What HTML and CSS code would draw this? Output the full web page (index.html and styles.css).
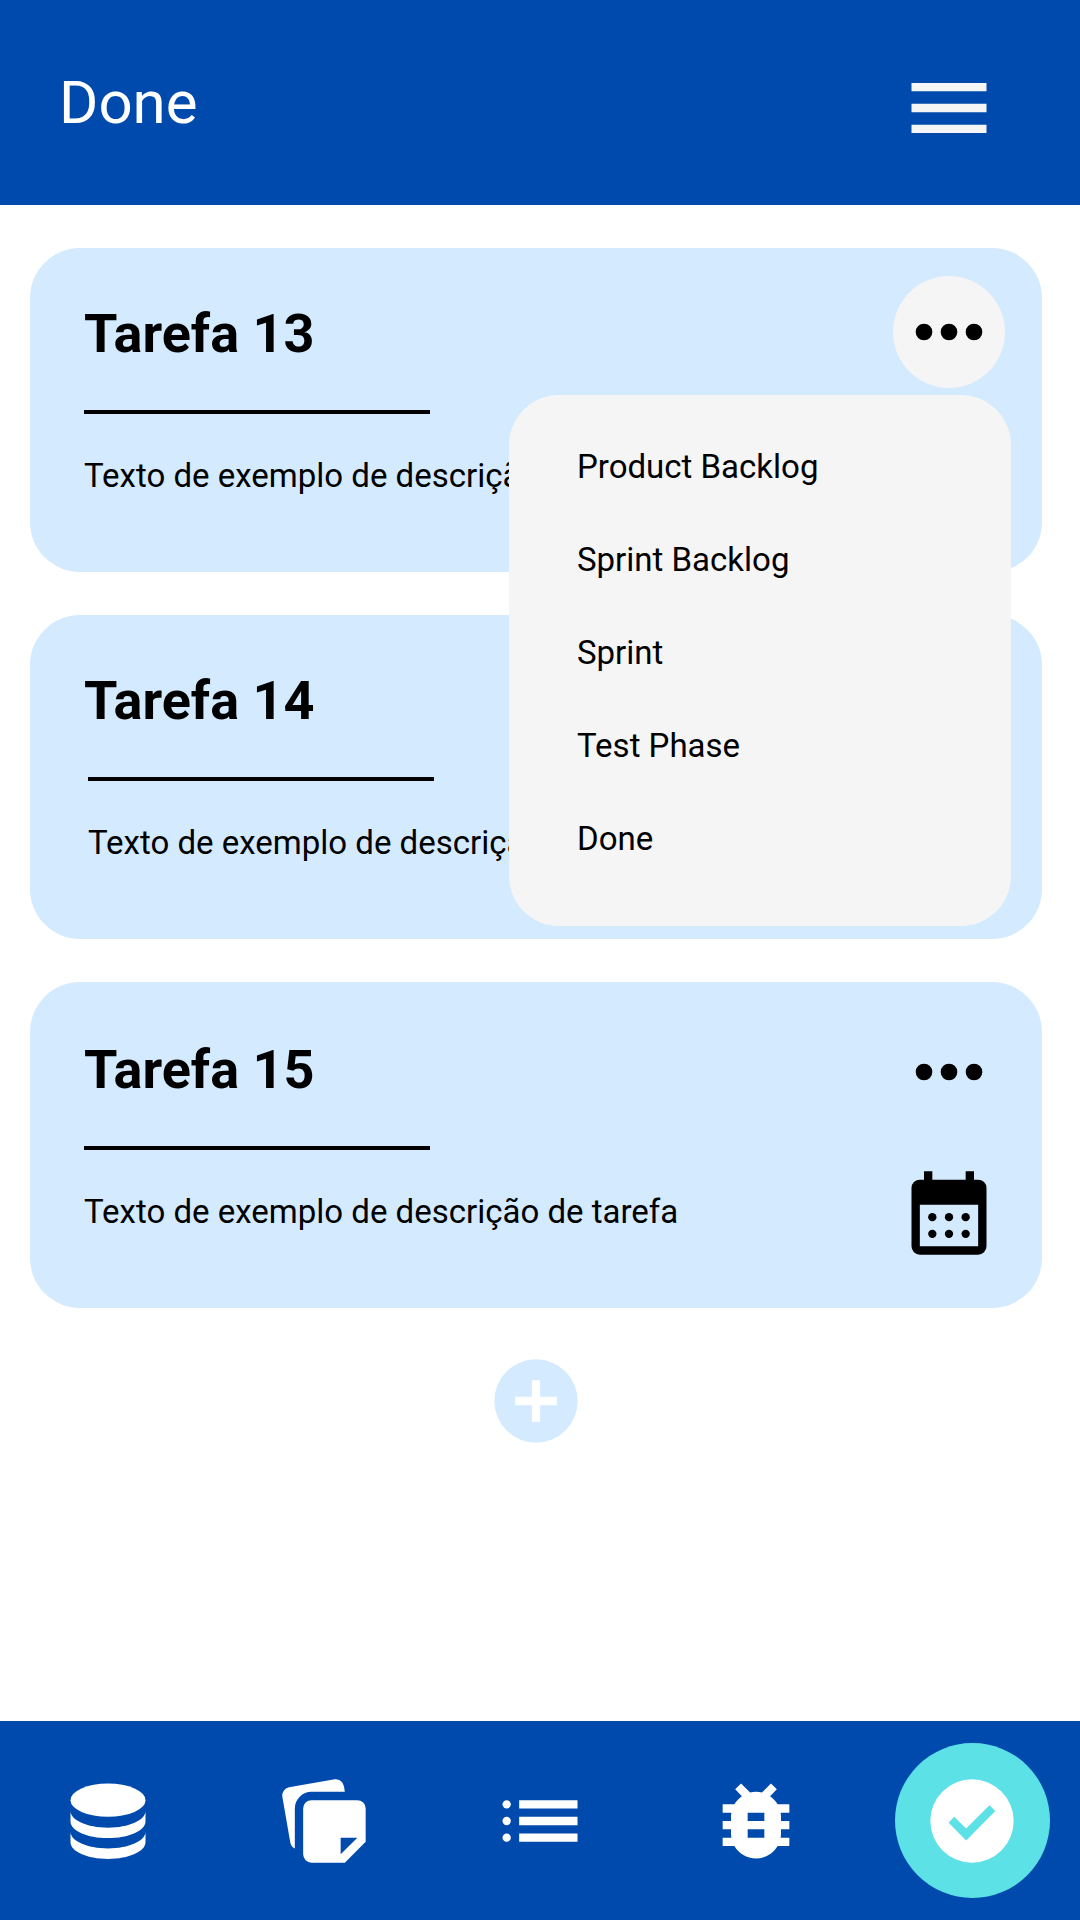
FILE: index.html
```html
<!DOCTYPE html>
<html lang="pt-BR">
<head>
  <meta charset="utf-8">
  <meta name="viewport" content="width=device-width, initial-scale=1">
  <title>Done</title>
  <link rel="stylesheet" href="styles.css">
</head>
<body>
  <svg class="sprite" aria-hidden="true">
    <symbol id="icon-more" viewBox="0 0 24 24">
      <circle cx="6" cy="12" r="2"/><circle cx="12" cy="12" r="2"/><circle cx="18" cy="12" r="2"/>
    </symbol>
    <symbol id="icon-calendar" viewBox="0 0 24 24">
      <path fill-rule="evenodd" d="M6 2h2v2h8V2h2v2h1a2 2 0 0 1 2 2v14a2 2 0 0 1-2 2H5a2 2 0 0 1-2-2V6a2 2 0 0 1 2-2h1zM5 10v10h14V10z"/>
      <circle cx="8" cy="13" r="1"/><circle cx="12" cy="13" r="1"/><circle cx="16" cy="13" r="1"/>
      <circle cx="8" cy="17" r="1"/><circle cx="12" cy="17" r="1"/><circle cx="16" cy="17" r="1"/>
    </symbol>
  </svg>

  <header class="topbar">
    <h1 class="topbar-title">Done</h1>
    <button class="icon-button topbar-menu" type="button" aria-label="Menu">
      <svg class="icon" viewBox="0 0 24 24"><path d="M3 6h18v2H3zM3 11h18v2H3zM3 16h18v2H3z"/></svg>
    </button>
  </header>

  <main class="board">
    <article class="task">
      <div class="task-body">
        <h2 class="task-title">Tarefa 13</h2>
        <div class="task-detail">
          <hr class="task-rule">
          <p class="task-text">Texto de exemplo de descrição de tarefa</p>
        </div>
      </div>
      <div class="task-actions">
        <button class="icon-button is-open" type="button" aria-label="Mover tarefa 13" aria-expanded="true">
          <svg class="icon"><use href="#icon-more"/></svg>
        </button>
        <button class="icon-button" type="button" aria-label="Data da tarefa 13">
          <svg class="icon"><use href="#icon-calendar"/></svg>
        </button>
      </div>
      <ul class="move-menu">
        <li><button class="move-option" type="button">Product Backlog</button></li>
        <li><button class="move-option" type="button">Sprint Backlog</button></li>
        <li><button class="move-option" type="button">Sprint</button></li>
        <li><button class="move-option" type="button">Test Phase</button></li>
        <li><button class="move-option" type="button">Done</button></li>
      </ul>
    </article>

    <article class="task">
      <div class="task-body">
        <h2 class="task-title">Tarefa 14</h2>
        <div class="task-detail task-detail-indented">
          <hr class="task-rule">
          <p class="task-text">Texto de exemplo de descrição de tarefa</p>
        </div>
      </div>
      <div class="task-actions">
        <button class="icon-button" type="button" aria-label="Mover tarefa 14">
          <svg class="icon"><use href="#icon-more"/></svg>
        </button>
        <button class="icon-button" type="button" aria-label="Data da tarefa 14">
          <svg class="icon"><use href="#icon-calendar"/></svg>
        </button>
      </div>
    </article>

    <article class="task task-roomy">
      <div class="task-body">
        <h2 class="task-title">Tarefa 15</h2>
        <div class="task-detail">
          <hr class="task-rule">
          <p class="task-text">Texto de exemplo de descrição de tarefa</p>
        </div>
      </div>
      <div class="task-actions">
        <button class="icon-button" type="button" aria-label="Mover tarefa 15">
          <svg class="icon"><use href="#icon-more"/></svg>
        </button>
        <button class="icon-button" type="button" aria-label="Data da tarefa 15">
          <svg class="icon"><use href="#icon-calendar"/></svg>
        </button>
      </div>
    </article>

    <button class="icon-button add-task" type="button" aria-label="Adicionar tarefa">
      <svg class="icon" viewBox="0 0 24 24"><path fill-rule="evenodd" d="M12 2a10 10 0 1 0 0 20 10 10 0 0 0 0-20zM17 13h-4v4h-2v-4H7v-2h4V7h2v4h4z"/></svg>
    </button>
  </main>

  <nav class="tabs">
    <a class="tab" href="#product-backlog" aria-label="Product Backlog">
      <svg class="icon" viewBox="0 0 24 24"><ellipse cx="12" cy="7" rx="9" ry="4"/><path d="M3 9.6c0 2.2 4 4 9 4s9-1.8 9-4v2.5c0 2.2-4 4-9 4s-9-1.8-9-4zM3 14.6c0 2.2 4 4 9 4s9-1.8 9-4v2.5c0 2.2-4 4-9 4s-9-1.8-9-4z"/></svg>
    </a>
    <a class="tab" href="#sprint-backlog" aria-label="Sprint Backlog">
      <svg class="icon" viewBox="0 0 24 24"><path d="M17 5l-.2-1.3A2 2 0 0 0 14.6 2L3.6 3.9A2 2 0 0 0 2 6.2L3.9 17.1c.1.7.5 1.2 1.1 1.5V9a4 4 0 0 1 4-4z"/><path fill-rule="evenodd" d="M9 7h11a2 2 0 0 1 2 2v8l-5 5H9a2 2 0 0 1-2-2V9a2 2 0 0 1 2-2zM16 16v4l4-4z"/></svg>
    </a>
    <a class="tab" href="#sprint" aria-label="Sprint">
      <svg class="icon" viewBox="0 0 24 24"><circle cx="4" cy="8" r="1"/><circle cx="4" cy="12" r="1"/><circle cx="4" cy="16" r="1"/><path d="M7 7h14v2H7zM7 11h14v2H7zM7 15h14v2H7z"/></svg>
    </a>
    <a class="tab" href="#test-phase" aria-label="Test Phase">
      <svg class="icon" viewBox="0 0 24 24"><path d="M20 8h-2.81c-.45-.78-1.07-1.45-1.82-1.96L17 4.41 15.59 3l-2.17 2.17C12.96 5.06 12.49 5 12 5s-.96.06-1.41.17L8.41 3 7 4.41l1.62 1.63C7.88 6.55 7.26 7.22 6.81 8H4v2h2.09c-.05.33-.09.66-.09 1v1H4v2h2v1c0 .34.04.67.09 1H4v2h2.81c1.04 1.79 2.97 3 5.19 3s4.15-1.21 5.19-3H20v-2h-2.09c.05-.33.09-.66.09-1v-1h2v-2h-2v-1c0-.34-.04-.67-.09-1H20V8zm-6 8h-4v-2h4v2zm0-4h-4v-2h4v2z"/></svg>
    </a>
    <a class="tab tab-current" href="#done" aria-label="Done" aria-current="page">
      <svg class="icon" viewBox="0 0 24 24"><path fill-rule="evenodd" d="M12 2a10 10 0 1 0 0 20 10 10 0 0 0 0-20zM10.6 13.8l5.6-5.6 1.4 1.4-7 7.1-4.2-4.3 1.3-1.4z"/></svg>
    </a>
  </nav>
</body>
</html>
```

FILE: styles.css
```css
:root {
  --blue: #004aad;
  --card: #d3eaff;
  --surface: #f5f5f5;
  --accent: #5ce1e6;
}

* {
  box-sizing: border-box;
}

body {
  margin: 0;
  min-height: 100vh;
  display: flex;
  flex-direction: column;
  background: #fff;
  color: #000;
  font-family: Roboto, "Liberation Sans", sans-serif;
}

.sprite {
  display: none;
}

.icon {
  display: block;
  width: 100px;
  height: 100px;
  fill: currentColor;
}

.icon-button {
  display: flex;
  align-items: center;
  justify-content: center;
  width: 100px;
  height: 100px;
  padding: 0;
  border: 0;
  border-radius: 50%;
  background: none;
  color: inherit;
  cursor: pointer;
}

.topbar {
  display: flex;
  align-items: flex-start;
  justify-content: space-between;
  padding: 58px 81px 47px 59px;
  background: var(--blue);
}

.topbar-title {
  margin: 0;
  color: #fff;
  font-size: 60px;
  font-weight: 400;
  line-height: 90px;
}

.topbar-menu {
  color: var(--surface);
}

.board {
  flex: 1;
  display: flex;
  flex-direction: column;
  gap: 43px;
  padding: 43px 38px 43px 30px;
}

.task {
  position: relative;
  display: flex;
  justify-content: space-between;
  padding-right: 43px;
  padding-left: 54px;
  border-radius: 50px;
  background: var(--card);
}

.task-roomy {
  padding-top: 2px;
}

.task-body {
  padding: 54px 0 76px;
}

.task-title {
  margin: 0 0 44px;
  font-size: 54px;
  font-weight: 700;
  line-height: 64px;
}

.task-detail-indented {
  padding-left: 4px;
}

.task-rule {
  width: 346px;
  height: 4px;
  margin: 0 0 42px;
  border: 0;
  background: #000;
}

.task-text {
  margin: 0;
  font-size: 33px;
  line-height: 40px;
}

.task-actions {
  display: flex;
  flex-direction: column;
  align-items: center;
  gap: 41px;
  width: 100px;
  padding-top: 38px;
}

.is-open {
  width: 112px;
  height: 112px;
  margin-top: -10px;
  flex: none;
  background: var(--surface);
}

.move-menu {
  position: absolute;
  top: 147px;
  right: 31px;
  z-index: 1;
  width: 502px;
  margin: 0;
  padding: 25px 0 41px;
  border-radius: 50px;
  background: var(--surface);
  list-style: none;
}

.move-option {
  display: block;
  width: 100%;
  padding: 27px 68px 26px;
  border: 0;
  background: none;
  color: inherit;
  font: inherit;
  font-size: 33px;
  line-height: 40px;
  text-align: left;
  cursor: pointer;
}

.add-task {
  align-self: center;
  color: var(--card);
}

.tabs {
  display: grid;
  grid-template-columns: repeat(5, 1fr);
  place-items: center;
  padding: 22px 0;
  background: var(--blue);
}

.tab {
  display: flex;
  align-items: center;
  justify-content: center;
  width: 155px;
  height: 155px;
  border-radius: 50%;
  color: #fff;
}

.tab-current {
  background: var(--accent);
}
```
